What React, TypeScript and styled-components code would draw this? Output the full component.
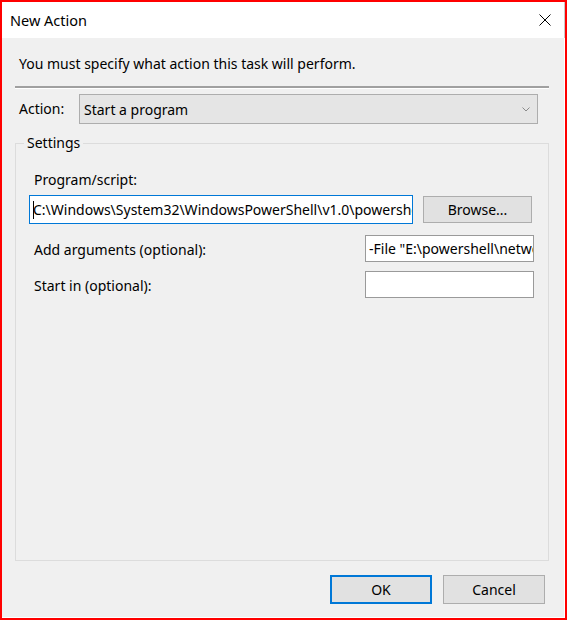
import React from "react";
import styled, { createGlobalStyle } from "styled-components";

const Global = createGlobalStyle`
  html, body { margin: 0; padding: 0; background: #ffffff; }
  * { box-sizing: border-box; }
  body { font-family: "Noto Sans", "Open Sans", sans-serif; font-size: 14px; color: #000; }
`;

const Window = styled.div`
  width: 567px;
  height: 620px;
  border: 2px solid #ff0000;
  display: flex;
  flex-direction: column;
  background: #f0f0f0;
`;

const TitleBar = styled.div`
  height: 36px;
  flex: 0 0 36px;
  background: #ffffff;
  display: flex;
  align-items: center;
  justify-content: space-between;
  padding: 0 13px 0 8px;
  border-right: 1px solid #c8c8c8;
`;

const Title = styled.div`
  font-size: 14.5px;
  line-height: 20px;
  color: #000;
`;

const CloseBox = styled.div`
  width: 12px;
  height: 12px;
  display: flex;
`;

const Body = styled.div`
  flex: 1;
  display: flex;
  flex-direction: column;
  padding: 15px 15px 13px 13px;
  border-right: 1px solid #ffffff;
  border-bottom: 1px solid #ffffff;
`;

const Instruction = styled.div`
  line-height: 20px;
  margin-left: 4px;
  margin-top: 1px;
`;

const Separator = styled.div`
  margin-top: 12px;
  height: 3px;
  border-top: 2px solid #a0a0a0;
  border-bottom: 1px solid #ffffff;
`;

const ActionRow = styled.div`
  margin-top: 5px;
  display: flex;
  align-items: center;
`;

const Label = styled.div<{ $indent?: number; $width?: number; $drop?: number }>`
  line-height: 20px;
  margin-left: ${(p) => p.$indent ?? 0}px;
  padding-top: ${(p) => p.$drop ?? 0}px;
  width: ${(p) => (p.$width ? `${p.$width}px` : "auto")};
  flex: ${(p) => (p.$width ? "0 0 auto" : "1")};
  white-space: nowrap;
`;

const Combo = styled.div`
  flex: 0 0 459px;
  height: 30px;
  margin-left: 15px;
  background: #e5e5e5;
  border: 1px solid #adadad;
  display: flex;
  align-items: center;
  justify-content: space-between;
  padding: 0 7px 0 4px;
`;

const GroupBox = styled.fieldset`
  margin: 9px 0 0 0;
  padding: 0;
  border: 1px solid #dcdcdc;
  flex: 1;
  min-width: 0;
  display: flex;
  flex-direction: column;
`;

const Legend = styled.legend`
  margin-left: 8px;
  padding: 0 3px;
  line-height: 20px;
`;

const GroupContent = styled.div`
  display: flex;
  flex-direction: column;
  padding: 0 14px 0 13px;
`;

const FieldLabel = styled.div<{ $top: number }>`
  margin-top: ${(p) => p.$top}px;
  margin-left: 5px;
  line-height: 20px;
`;

const ProgramRow = styled.div`
  margin-top: 5px;
  display: flex;
  align-items: center;
  gap: 10px;
`;

const TextBox = styled.div<{ $focused?: boolean; $width?: number; $height: number }>`
  ${(p) => (p.$width ? `flex: 0 0 ${p.$width}px;` : "flex: 1;")}
  height: ${(p) => p.$height}px;
  background: #ffffff;
  border: 1px solid ${(p) => (p.$focused ? "#0078d7" : "#9a9a9a")};
  display: flex;
  align-items: center;
  padding-left: 3px;
  overflow: hidden;
  white-space: nowrap;
  min-width: 0;
`;

const Caret = styled.span`
  display: inline-block;
  width: 1px;
  height: 18px;
  background: #000;
  margin-right: -1px;
  flex: 0 0 1px;
`;

const FieldRow = styled.div<{ $top: number }>`
  margin-top: ${(p) => p.$top}px;
  display: flex;
  align-items: center;
`;

const Button = styled.div<{ $default?: boolean; $width: number; $height: number }>`
  flex: 0 0 ${(p) => p.$width}px;
  height: ${(p) => p.$height}px;
  background: #e1e1e1;
  border: ${(p) => (p.$default ? "2px solid #0078d7" : "1px solid #adadad")};
  display: flex;
  align-items: center;
  justify-content: center;
  line-height: 20px;
`;

const ButtonRow = styled.div`
  margin-top: 14px;
  display: flex;
  justify-content: flex-end;
  gap: 11px;
  padding-right: 4px;
`;

export default function App() {
  return (
    <>
      <Global />
      <Window>
        <TitleBar>
          <Title>New Action</Title>
          <CloseBox>
            <svg width="12" height="12" viewBox="0 0 12 12">
              <path d="M0.5 0.5 L11.5 11.5 M11.5 0.5 L0.5 11.5" stroke="#000" strokeWidth="1" fill="none" />
            </svg>
          </CloseBox>
        </TitleBar>
        <Body>
          <Instruction>You must specify what action this task will perform.</Instruction>
          <Separator />
          <ActionRow>
            <Label $indent={4} $width={45}>Action:</Label>
            <Combo>
              <span>Start a program</span>
              <svg width="8" height="5" viewBox="0 0 8 5">
                <path d="M0.5 0.5 L4 4 L7.5 0.5" stroke="#8a8a8a" strokeWidth="1" fill="none" />
              </svg>
            </Combo>
          </ActionRow>
          <GroupBox>
            <Legend>Settings</Legend>
            <GroupContent>
              <FieldLabel $top={17}>Program/script:</FieldLabel>
              <ProgramRow>
                <TextBox $focused $width={384} $height={29}>
                  <Caret />
                  <span>C:\Windows\System32\WindowsPowerShell\v1.0\powershell.exe</span>
                </TextBox>
                <Button $width={109} $height={27}>Browse...</Button>
              </ProgramRow>
              <FieldRow $top={11}>
                <Label $indent={5} $drop={2}>Add arguments (optional):</Label>
                <TextBox $width={169} $height={27}>
                  <span>-File "E:\powershell\network.ps1"</span>
                </TextBox>
              </FieldRow>
              <FieldRow $top={9}>
                <Label $indent={5} $drop={2}>Start in (optional):</Label>
                <TextBox $width={169} $height={27} />
              </FieldRow>
            </GroupContent>
          </GroupBox>
          <ButtonRow>
            <Button $default $width={102} $height={29}>OK</Button>
            <Button $width={102} $height={29}>Cancel</Button>
          </ButtonRow>
        </Body>
      </Window>
    </>
  );
}
